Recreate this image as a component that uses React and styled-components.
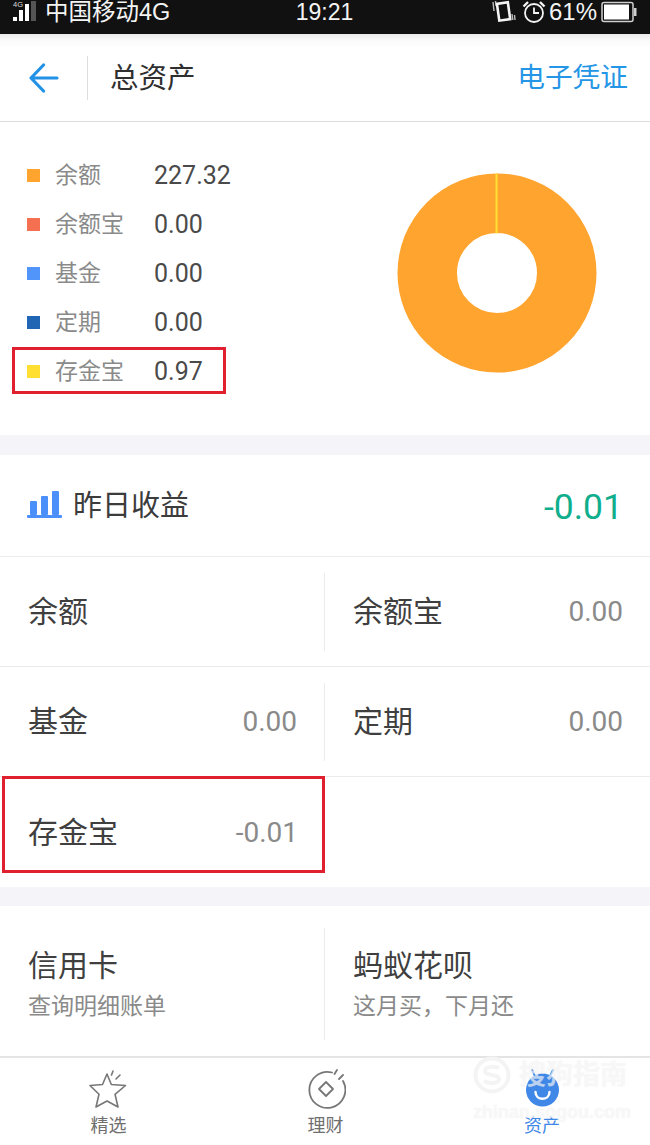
import React from "react"
import styled, { createGlobalStyle } from "styled-components"

const legend = [
  { name: "余额", value: "227.32", color: "#ffa42e" },
  { name: "余额宝", value: "0.00", color: "#f56f51" },
  { name: "基金", value: "0.00", color: "#5195fb" },
  { name: "定期", value: "0.00", color: "#2166b4" },
  { name: "存金宝", value: "0.97", color: "#ffe032" },
]

const GlobalStyle = createGlobalStyle`
  html, body {
    margin: 0;
    padding: 0;
    background: #f5f5f9;
  }
  body {
    font-family: Roboto, "Noto Sans CJK SC", sans-serif;
  }
  * {
    box-sizing: border-box;
  }
`

const Page = styled.div`
  position: relative;
  width: 650px;
  height: 1145px;
  overflow: hidden;
  display: flex;
  flex-direction: column;
  background: #f5f5f9;
`

const StatusBar = styled.div`
  height: 34px;
  flex: none;
  background: #111111;
  color: #f4f4f4;
  display: grid;
  grid-template-columns: 1fr auto 1fr;
  align-items: center;
  padding: 0 13px 10px 12px;
  font-size: 24px;
  line-height: 24px;
`

const StatusLeft = styled.div`
  display: flex;
  align-items: center;
  gap: 9px;
  font-size: 23.5px;
  font-family: "Liberation Sans", "Noto Sans CJK SC", sans-serif;
`

const StatusTime = styled.div`
  font-family: "Liberation Sans", sans-serif;
  font-size: 23px;
`

const StatusRight = styled.div`
  display: flex;
  align-items: center;
  justify-content: flex-end;
  gap: 3px;
  font-family: "Liberation Sans", sans-serif;
  font-size: 24px;
`

const Header = styled.header`
  height: 88px;
  flex: none;
  display: flex;
  align-items: center;
  background: linear-gradient(#e9e9e9 0, #fbfbfb 7px, #ffffff 16px);
  border-bottom: 1px solid #dcdcdc;
  padding: 0 22px 0 29px;
`

const BackButton = styled.div`
  width: 59px;
  height: 44px;
  display: flex;
  align-items: center;
  border-right: 1px solid #dddddd;
`

const Title = styled.h1`
  margin: 2px 0 0 22px;
  flex: 1;
  font-size: 28.5px;
  font-weight: 400;
  line-height: 40px;
  color: #2f2f2f;
`

const HeaderLink = styled.div`
  font-size: 27.7px;
  line-height: 40px;
  color: #2596e6;
`

const AssetPanel = styled.section`
  height: 313px;
  flex: none;
  background: #fff;
  display: flex;
  justify-content: space-between;
  padding: 29px 53px 0 27px;
`

const Legend = styled.div`
  display: flex;
  flex-direction: column;
`

const LegendRow = styled.div`
  height: 49px;
  display: flex;
  align-items: center;
`

const Swatch = styled.span`
  width: 13px;
  height: 13px;
  background: ${(p) => p.$color};
`

const LegendName = styled.span`
  width: 99px;
  margin: 0 0 5px 15px;
  font-size: 23px;
  color: #8a8a8a;
`

const LegendValue = styled.span`
  font-size: 25px;
  color: #4a4a4a;
`

const Donut = styled.svg`
  width: 200px;
  height: 200px;
  margin-top: 22px;
`

const Mark = styled.div`
  position: absolute;
  left: ${(p) => p.$x}px;
  top: ${(p) => p.$y}px;
  width: ${(p) => p.$w}px;
  height: ${(p) => p.$h}px;
  border: 3px solid #e0202e;
`

const Section = styled.section`
  margin-top: 20px;
  flex: none;
  background: #fff;
`

const CardSection = styled(Section)`
  margin-top: 19px;
`

const IncomeHead = styled.div`
  height: 102px;
  display: flex;
  align-items: center;
  padding: 0 27px 4px 27px;
  border-bottom: 1px solid #ececec;
`

const IncomeTitle = styled.div`
  flex: 1;
  margin: 0 0 2px 11px;
  font-size: 29px;
  color: #3c3c3c;
`

const IncomeValue = styled.div`
  margin-top: 6px;
  font-size: 35.5px;
  color: #0fae8c;
`

const Row = styled.div`
  height: 110px;
  display: grid;
  grid-template-columns: 325px 325px;
  align-items: center;
  border-bottom: ${(p) => (p.$plain ? "none" : "1px solid #ececec")};
`

const CardRow = styled(Row)`
  height: 150px;
  padding-top: 6px;
  border-bottom: none;
`

const Cell = styled.div`
  height: 78px;
  display: flex;
  align-items: center;
  justify-content: space-between;
  padding: 0 27px 0 28px;
  border-right: ${(p) => (p.$divide ? "1px solid #ececec" : "none")};
`

const CellName = styled.span`
  margin-bottom: 5px;
  font-size: 30px;
  color: #3f3f3f;
`

const CellValue = styled.span`
  font-size: 28px;
  color: #8a8a8a;
`

const CardCell = styled(Cell)`
  height: 112px;
  flex-direction: column;
  align-items: flex-start;
  justify-content: center;
`

const CardTitle = styled.div`
  font-size: 30px;
  line-height: 40px;
  color: #3f3f3f;
`

const CardNote = styled.div`
  margin-top: 5px;
  font-size: 23px;
  line-height: 32px;
  color: #8a8a8a;
`

const TabBar = styled.nav`
  flex: none;
  height: 89px;
  background: #fff;
  border-top: 2px solid #e4e4e4;
  display: grid;
  grid-template-columns: 217px 217px 216px;
`

const Tab = styled.div`
  display: flex;
  flex-direction: column;
  align-items: center;
  padding-top: 11px;
  font-size: 18px;
  line-height: 24px;
  color: ${(p) => (p.$active ? "#3f88e8" : "#6f6f6f")};
`

const TabIcon = styled.svg`
  width: 40px;
  height: 40px;
  margin-bottom: 5px;
`

// faint site watermark lying over the tab bar
const Watermark = styled.div`
  position: absolute;
  left: 473px;
  top: 1056px;
  width: 156px;
  color: rgba(255, 255, 255, 0.6);
  text-shadow: 0 0 1px rgba(170, 170, 170, 0.22);
  pointer-events: none;
`

const MarkTitle = styled.div`
  display: flex;
  align-items: center;
  gap: 8px;
  height: 38px;
  font-size: 27px;
  font-weight: 700;
  line-height: 38px;
`

const MarkUrl = styled.div`
  margin-top: 10px;
  font-family: "Liberation Sans", sans-serif;
  font-size: 18px;
  font-weight: 700;
  line-height: 16px;
  white-space: nowrap;
`

const Signal = () => (
  <svg width="24" height="24" viewBox="0 0 24 24">
    <text x="1" y="6.5" fontSize="7.5" fontFamily="Liberation Sans" fill="#ddd">4G</text>
    <rect x="1" y="17" width="4" height="4" fill="#fff" />
    <rect x="7" y="10" width="4" height="11" fill="#fff" />
    <rect x="13" y="4" width="4" height="17" fill="#fff" />
    <rect x="19" y="1" width="5" height="20" fill="#555" />
  </svg>
)

const Vibrate = () => (
  <svg width="28" height="24" viewBox="-4 0 28 24" fill="none" stroke="#f4f4f4">
    <rect x="3" y="3" width="11" height="17" strokeWidth="2.6" transform="rotate(-8 8 11)" />
    <path d="M-2 2l1 9M0.5 1l.6 5M17 14l.8 6M19.5 15l.5 5" strokeWidth="1.4" opacity=".75" />
  </svg>
)

const Alarm = () => (
  <svg width="24" height="24" viewBox="0 0 24 24" fill="none" stroke="#f4f4f4" strokeWidth="1.8">
    <circle cx="12" cy="13" r="9" />
    <path d="M12 7.5V13h5" />
    <path d="M1.5 6.5 6 2M22.5 6.5 18 2" strokeWidth="2.4" />
  </svg>
)

const Battery = () => (
  <svg width="37" height="22" viewBox="0 0 37 22">
    <rect x="2" y="1.5" width="31" height="19" rx="2" fill="none" stroke="#cfcfcf" strokeWidth="1.5" />
    <rect x="4" y="3.5" width="25" height="15" fill="#fff" />
    <rect x="34" y="7" width="2.5" height="8" fill="#cfcfcf" />
  </svg>
)

const BackArrow = () => (
  <svg width="30" height="30" viewBox="0 0 30 30" fill="none" stroke="#2192e6" strokeWidth="3.2" strokeLinecap="round" strokeLinejoin="round">
    <path d="M28 15H2.5M14.5 2 2 15l12.5 13" />
  </svg>
)

const BarsIcon = () => (
  <svg width="35" height="28" viewBox="0 0 35 28" fill="#4a8ffa">
    <rect x="3" y="11" width="7" height="14" rx="1" />
    <rect x="14" y="6" width="7" height="19" rx="1" />
    <rect x="25" y="1" width="7" height="24" rx="1" />
    <rect x="0" y="25" width="35" height="3" rx="1" />
  </svg>
)

const StarIcon = () => (
  <TabIcon viewBox="0 0 40 40" fill="none" stroke="#777" strokeWidth="1.6" strokeLinejoin="round" strokeLinecap="round">
    <path d="M18 5l4.3 10.5 14.2 1-10.5 8.800 3 12.700L18 32l-11 6 3-12.700L1 16.500l12.500-1z" />
    <path d="M24 2l-1.5 4M31 6l-4 4" />
  </TabIcon>
)

const CoinIcon = () => (
  <TabIcon viewBox="0 0 40 40" fill="none" stroke="#777" strokeWidth="1.8" strokeLinecap="round" strokeLinejoin="round">
    <path d="M26 3.5A18 18 0 1 0 37 12" />
    <path d="M20 13l7 7-7 7-7-7z" />
    <path d="M31 1l-2.5 4M37 6l-4 4" />
  </TabIcon>
)

const AssetIcon = () => (
  <TabIcon viewBox="0 0 40 40">
    <circle cx="20.5" cy="21" r="16.5" fill="#3f88e8" />
    <path d="M10 1l4 8M31 1l-4 8" stroke="#3f88e8" strokeWidth="2" strokeLinecap="round" />
    <path d="M13.5 23c0 9 14 9 14 0" fill="none" stroke="#fff" strokeWidth="2.4" strokeLinecap="round" />
  </TabIcon>
)

const MarkLogo = () => (
  <svg width="38" height="38" viewBox="0 0 38 38" fill="none" stroke="#f4f4f4" strokeWidth="4">
    <circle cx="19" cy="19" r="16.5" />
    <path d="M26 12c-4-2-14-2-14 3s14 3 14 8-10 5-15 2" />
  </svg>
)

const App = () => (
  <Page>
    <GlobalStyle />
    <StatusBar>
      <StatusLeft>
        <Signal />
        <span>中国移动4G</span>
      </StatusLeft>
      <StatusTime>19:21</StatusTime>
      <StatusRight>
        <Vibrate />
        <Alarm />
        <span>61%</span>
        <Battery />
      </StatusRight>
    </StatusBar>

    <Header>
      <BackButton>
        <BackArrow />
      </BackButton>
      <Title>总资产</Title>
      <HeaderLink>电子凭证</HeaderLink>
    </Header>

    <AssetPanel>
      <Legend>
        {legend.map((item) => (
          <LegendRow key={item.name}>
            <Swatch $color={item.color} />
            <LegendName>{item.name}</LegendName>
            <LegendValue>{item.value}</LegendValue>
          </LegendRow>
        ))}
      </Legend>
      <Donut viewBox="0 0 200 200">
        <circle cx="100" cy="100" r="69.75" fill="none" stroke="#ffa42e" strokeWidth="59.5" />
        <rect x="98.5" y="0.5" width="2" height="60" fill="#ffe032" />
      </Donut>
    </AssetPanel>

    <Section>
      <IncomeHead>
        <BarsIcon />
        <IncomeTitle>昨日收益</IncomeTitle>
        <IncomeValue>-0.01</IncomeValue>
      </IncomeHead>
      <Row>
        <Cell $divide>
          <CellName>余额</CellName>
        </Cell>
        <Cell>
          <CellName>余额宝</CellName>
          <CellValue>0.00</CellValue>
        </Cell>
      </Row>
      <Row>
        <Cell $divide>
          <CellName>基金</CellName>
          <CellValue>0.00</CellValue>
        </Cell>
        <Cell>
          <CellName>定期</CellName>
          <CellValue>0.00</CellValue>
        </Cell>
      </Row>
      <Row $plain>
        <Cell>
          <CellName>存金宝</CellName>
          <CellValue>-0.01</CellValue>
        </Cell>
      </Row>
    </Section>

    <CardSection>
      <CardRow>
        <CardCell $divide>
          <CardTitle>信用卡</CardTitle>
          <CardNote>查询明细账单</CardNote>
        </CardCell>
        <CardCell>
          <CardTitle>蚂蚁花呗</CardTitle>
          <CardNote>这月买，下月还</CardNote>
        </CardCell>
      </CardRow>
    </CardSection>

    <TabBar>
      <Tab>
        <StarIcon />
        精选
      </Tab>
      <Tab>
        <CoinIcon />
        理财
      </Tab>
      <Tab $active>
        <AssetIcon />
        资产
      </Tab>
    </TabBar>

    <Mark $x={12} $y={347} $w={214} $h={47} />
    <Mark $x={2} $y={776} $w={323} $h={97} />

    <Watermark>
      <MarkTitle>
        <MarkLogo />
        搜狗指南
      </MarkTitle>
      <MarkUrl>zhinan.sogou.com</MarkUrl>
    </Watermark>
  </Page>
)

export default App
